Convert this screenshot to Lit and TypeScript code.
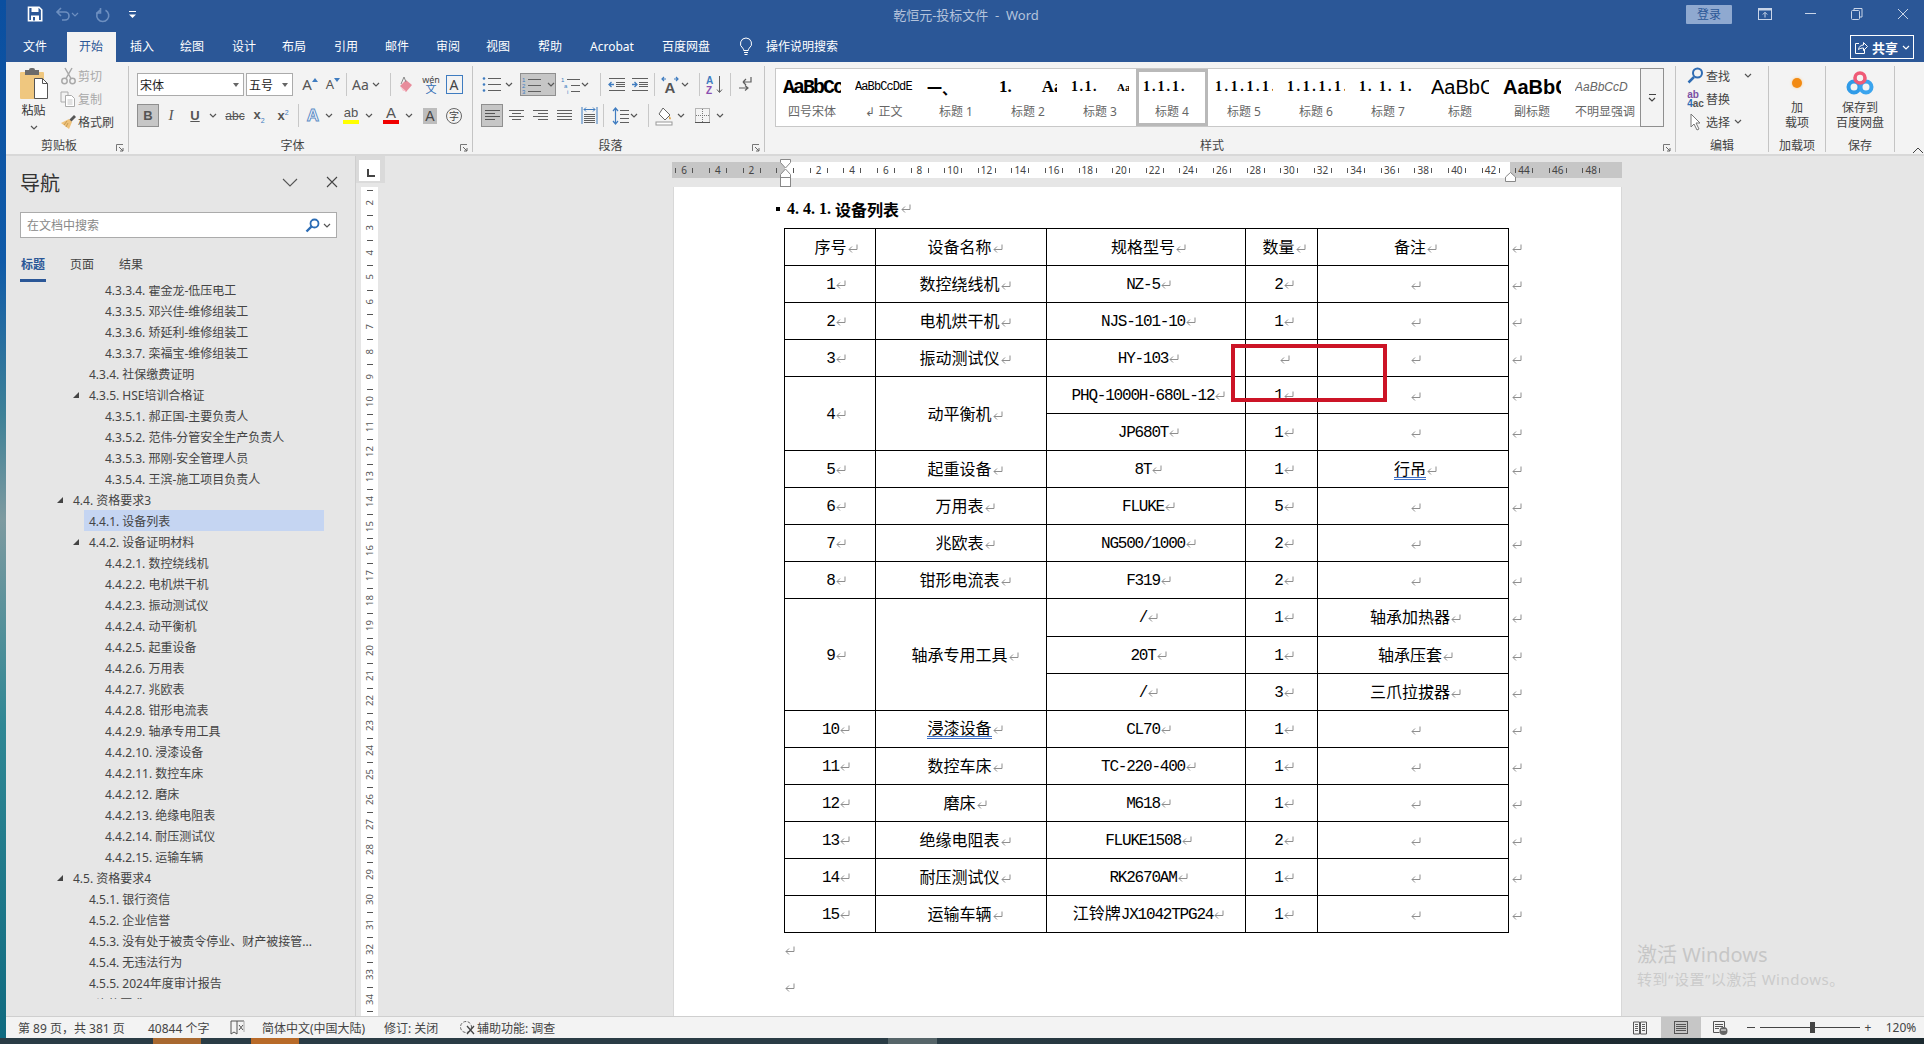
import { LitElement, html, css, svg, TemplateResult } from "lit";
import { customElement } from "lit/decorators.js";

type Slot = [number, number, unknown, string?];

function slots(start: number, items: Slot[]) {
  let prev = start;
  return items.map(([a, b, t, cls]) => {
    const r = html`<span class="slot ${cls ?? ""}" style="width:${b - a}px;margin-left:${a - prev}px">${t}</span>`;
    prev = b;
    return r;
  });
}
const I = (w: number, h: number, body: unknown) => html`<svg width=${w} height=${h} class="ic">${body}</svg>`;
const chev = (c = "#555") => I(8, 5, svg`<path d="M1 1l3 3 3-3" fill="none" stroke=${c} stroke-width="1.2"/>`);
const sep = html`<i class="sep"></i>`;
const G = "#5f5f5f";
const B = "#3f7cc0";
const lines = (x: number, ys: number[], w: number[], c = G) => ys.map((y, i) => svg`<rect x=${x} y=${y} width=${w[i]} height="1" fill=${c}/>`);

const icons = {
  save: I(16, 16, svg`<path d="M1.5 1.2h10.6l2.6 2.6v11H1.5z" fill="none" stroke="#fff" stroke-width="1.6"/><rect x="4.5" y="1.5" width="7" height="4.5" fill="#fff"/><rect x="4" y="9.5" width="8" height="5" fill="#fff"/><rect x="6" y="11" width="2" height="3.5" fill="#2b5797"/>`),
  undo: I(16, 16, svg`<path d="M2 6h8a3.8 3.8 0 0 1 0 8H7M6 2L2 6l4 4" fill="none" stroke="#6d8fc0" stroke-width="1.6"/>`),
  redo: I(16, 16, svg`<path d="M5 3.2a6 6 0 1 0 5.5 0M5.5 1v5H1" fill="none" stroke="#6d8fc0" stroke-width="1.6" transform="translate(0 1)"/>`),
  custom: I(9, 9, svg`<rect x="1" y="1" width="7" height="1" fill="#fff"/><path d="M1 4.5h7L4.5 8z" fill="#fff"/>`),
  display: I(14, 12, svg`<rect x=".5" y=".5" width="13" height="11" fill="none" stroke="#c9d5e8"/><rect x=".5" y=".5" width="13" height="2" fill="#c9d5e8"/><path d="M7 9.5V4.5M4.8 6.5L7 4.3l2.2 2.2" fill="none" stroke="#c9d5e8"/>`),
  min: I(12, 2, svg`<rect width="11" height="1" y="0" fill="#c9d5e8"/>`),
  restore: I(12, 12, svg`<rect x=".5" y="2.5" width="8" height="9" rx="1" fill="none" stroke="#c9d5e8"/><path d="M3 2.5V.5h8v8.5H8.5" fill="none" stroke="#c9d5e8"/>`),
  close: I(12, 12, svg`<path d="M1 1l10 10M11 1L1 11" stroke="#c9d5e8" stroke-width="1"/>`),
  bulb: I(14, 19, svg`<path d="M7 1a5.6 5.6 0 0 0-3.3 10.1c.8.7 1 1.500 1 2.400h4.600c0-.9.200-1.700 1-2.400A5.600 5.600 0 0 0 7 1z" fill="none" stroke="#fff"/><path d="M5 15.500h4M5.500 17.500h3" stroke="#fff"/>`),
  share: I(14, 15, svg`<path d="M5 3.500H1.500v10h9V9" fill="none" stroke="#fff"/><path d="M4.500 9.500c.5-3 2.500-4.500 5-4.500V2.500l4 4-4 4V8c-2 0-3.500.5-5 1.500z" fill="none" stroke="#fff"/>`),
  paste: I(30, 31, svg`<rect x="1" y="4" width="24" height="27" rx="1" fill="#efc77f"/><rect x="6" y="2" width="14" height="5" fill="#6b6b6b"/><rect x="10" y="0" width="6" height="4" rx="2" fill="#6b6b6b"/><path d="M15.500 10.500h8l5 5v15h-13z" fill="#fff" stroke="#555"/><path d="M23.500 10.500v5h5" fill="none" stroke="#555"/>`),
  cut: I(15, 18, svg`<circle cx="3.500" cy="14" r="2.700" fill="none" stroke="#a9a9a9" stroke-width="1.500"/><circle cx="11.500" cy="14" r="2.700" fill="none" stroke="#a9a9a9" stroke-width="1.500"/><path d="M5 11.500L11 1M10 11.500L4 1" stroke="#a9a9a9" stroke-width="1.500"/>`),
  copy: I(16, 16, svg`<path d="M1 1h7v3M1 1v10h4" fill="none" stroke="#ababab"/><path d="M5.500 4.500h6l3 3v8h-9z" fill="#fff" stroke="#ababab"/><path d="M7.500 9h5M7.500 11h5M7.500 13h5" stroke="#c4c4c4"/>`),
  painter: I(17, 16, svg`<path d="M9 6l5-5 2 2-5 5z" fill="#555"/><path d="M9 5l3 3-3 7-8-6z" fill="#efc27a"/><path d="M7 7l-3 4M8 9l-2 4" stroke="#c69a52"/>`),
  launcher: I(8, 8, svg`<path d="M.5 7V.5H7" fill="none" stroke="#777"/><path d="M3 3l4 4M7 4v3H4" fill="none" stroke="#666"/>`),
  eraser: I(18, 18, svg`<path d="M3 10l6-6 6 5-6 7z" fill="#e88c9b"/><path d="M3 10l3 5h3" fill="#f7c7cf"/><path d="M4 8L7 1l2 5" fill="none" stroke="#888"/>`),
  bullets: I(19, 17, svg`<circle cx="2" cy="2.500" r="1.300" fill=${B}/><circle cx="2" cy="8.500" r="1.300" fill=${B}/><circle cx="2" cy="14.500" r="1.300" fill=${B}/>${lines(6, [2, 8, 14], [13, 13, 13])}`),
  numbered: I(19, 18, svg`<text x="0" y="5.500" font-size="6" fill=${B} font-family="Liberation Sans">1</text><text x="0" y="11.500" font-size="6" fill=${B} font-family="Liberation Sans">2</text><text x="0" y="17.500" font-size="6" fill=${B} font-family="Liberation Sans">3</text>${lines(6, [3, 9, 15], [13, 13, 13])}`),
  multi: I(19, 18, svg`<text x="0" y="5.500" font-size="6" fill=${B} font-family="Liberation Sans">1</text><text x="3" y="11.500" font-size="6" fill=${B} font-family="Liberation Sans">a</text><text x="6" y="17.500" font-size="6" fill=${B} font-family="Liberation Sans">i</text>${lines(6, [3], [13])}${lines(10, [9, 15], [9, 9])}`),
  outdent: I(18, 15, svg`<path d="M6 7.500H1M3.500 5L1 7.500 3.500 10" fill="none" stroke=${B} stroke-width="1.300"/>${lines(1, [1, 13], [16, 16])}${lines(8, [5, 7, 9], [9, 9, 9])}`),
  indent: I(18, 15, svg`<path d="M1 7.500h5M3.500 5L6 7.500 3.500 10" fill="none" stroke=${B} stroke-width="1.300"/>${lines(1, [1, 13], [16, 16])}${lines(8, [5, 7, 9], [9, 9, 9])}`),
  cnlayout: html`<span class="cn"><svg width="18" height="6" class="ic"><path d="M1 3h4M3 1L1 3l2 2M17 3h-4M15 1l2 2-2 2" fill="none" stroke=${B} stroke-width="1.200"/></svg><b>A</b></span>`,
  sort: I(20, 19, svg`<text x="1" y="8.500" font-size="10" fill=${B} font-family="Liberation Sans" font-weight="700">A</text><text x="1" y="18.500" font-size="10" fill="#8b4fb0" font-family="Liberation Sans" font-weight="700">Z</text><path d="M14.500 1v16M12 14.500l2.500 3 2.500-3" fill="none" stroke=${G}/>`),
  mark: I(16, 17, svg`<path d="M13 1v5H5M5 6l3-3M5 6l3 3" fill="none" stroke=${G} stroke-width="1.200"/><path d="M1 12h9M7 9.500l3 2.500-3 2.500" fill="none" stroke=${G} stroke-width="1.200"/>`),
  left: I(15, 13, lines(0, [1, 4, 7, 10], [15, 10, 15, 10], "#555")),
  center: I(15, 13, lines(0, [1, 7], [15, 15]).concat(lines(3, [4, 10], [9, 9]))),
  right: I(15, 13, lines(0, [1, 7], [15, 15]).concat(lines(5, [4, 10], [10, 10]))),
  justify: I(15, 13, lines(0, [1, 4, 7, 10], [15, 15, 15, 15])),
  dist: I(17, 19, svg`<rect x=".5" y="1" width="1" height="17" fill=${B}/><rect x="15.500" y="1" width="1" height="17" fill=${B}/><path d="M3 3.500h11M5 1.500l-2 2 2 2M12 1.500l2 2-2 2" fill="none" stroke=${B}/>${lines(3, [8, 10, 12, 14, 16], [11, 11, 11, 11, 11])}`),
  spacing: I(17, 18, svg`<path d="M3.500 1v16M1 4l2.500-3L6 4M1 14l2.500 3L6 14" fill="none" stroke=${B} stroke-width="1.200"/>${lines(8, [3, 7, 11, 15], [9, 9, 9, 9])}`),
  shade: I(17, 18, svg`<path d="M7 1l7 7-5 5-6-6z" fill="#fff" stroke="#666"/><path d="M13.500 9c1.500 2 2 3 .5 3.500-1 0-1.500-1.500-.5-3.500z" fill="#e0a64b"/><rect x="0" y="15" width="16" height="3" fill="#fff" stroke="#999"/>`),
  borders: I(15, 15, svg`<rect x=".5" y=".5" width="14" height="14" fill="none" stroke="#777" stroke-dasharray="1 1"/><path d="M7.500 1v14M1 7.500h14" stroke="#777" stroke-dasharray="1 1"/><rect y="14" width="15" height="1" fill="#555"/>`),
  find: I(17, 17, svg`<circle cx="10.500" cy="6" r="4.500" fill="none" stroke="#2f6cb3" stroke-width="2"/><path d="M7 10l-5.500 5.500" stroke="#2f6cb3" stroke-width="2.500"/>`),
  replace: html`<span class="rep"><i>ab</i><i><s>4</s>ac</i></span>`,
  select: I(13, 18, svg`<path d="M2 1v13l3-3 3 6 2-1-3-6h4z" fill="#fff" stroke="#777"/>`),
  dot: html`<i class="dot"></i>`,
  baidu: I(28, 26, svg`<circle cx="8" cy="17" r="5.500" fill="none" stroke="#2f9be8" stroke-width="4"/><circle cx="20" cy="17" r="5.500" fill="none" stroke="#3aa4ee" stroke-width="4"/><circle cx="14" cy="8" r="5" fill="none" stroke="#ef5a76" stroke-width="3.600"/>`),
  chevNav: I(16, 9, svg`<path d="M1 1l7 7 7-7" fill="none" stroke="#555" stroke-width="1.100"/>`),
  closeNav: I(12, 12, svg`<path d="M1 1l10 10M11 1L1 11" stroke="#444" stroke-width="1.100"/>`),
  searchBlue: I(15, 15, svg`<circle cx="9.500" cy="5.500" r="4" fill="none" stroke="#2b6cb5" stroke-width="1.800"/><path d="M6.500 8.500L1.500 13.500" stroke="#2b6cb5" stroke-width="2.400"/>`),
  tri: I(8, 8, svg`<path d="M7 1v6H1z" fill="#444"/>`),
  proof: I(15, 15, svg`<path d="M1 1h6v13l-3-2-3 2zM7 1h7" fill="none" stroke="#555"/><path d="M9 5l4 5M13 5l-4 5" stroke="#555"/><path d="M14 1v11" stroke="#aaa"/>`),
  access: I(17, 16, svg`<circle cx="7" cy="7" r="5.500" fill="none" stroke="#666" stroke-dasharray="3 1.500"/><path d="M8 6l7 8M15 6l-7 8" stroke="#444" stroke-width="1.300"/>`),
  book: I(14, 14, svg`<path d="M.5 1h6v12h-6zM7.500 1h6v12h-6z" fill="none" stroke="#555"/>${lines(2, [3, 5, 7, 9], [3, 3, 3, 3])}${lines(9, [3, 5, 7, 9], [3, 3, 3, 3])}`),
  print: I(14, 13, svg`<rect x=".5" y=".5" width="13" height="12" fill="none" stroke="#555"/>${lines(2, [3, 5, 7, 9], [10, 10, 10, 10], "#555")}`),
  web: I(15, 14, svg`<path d="M.5.500h11v6M.5.500v11h6" fill="none" stroke="#555"/>${lines(2, [3, 5, 7], [8, 8, 4], "#555")}<circle cx="10.500" cy="10" r="4" fill="#666"/><path d="M8 9h5" stroke="#fff"/>`),
  ret: I(11, 10, svg`<path d="M10 .5v5H2M5 2.500L2 5.500l3 3" fill="none" stroke="#8e8e8e"/>`),
};

const cjkSplit = (s: string) =>
  s.split(/([\x00-\x7f]+)/).filter(Boolean).map((p) => (/^[\x00-\x7f]+$/.test(p) ? html`<span class="lat">${p}</span>` : p));
const cellText = (s: string, cls = "") => html`<span class=${cls}>${cjkSplit(s)}</span>${icons.ret}`;

const TREE: [string, string, boolean?, boolean?][] = [
  ["l4", "4.3.3.4. 霍金龙-低压电工"],
  ["l4", "4.3.3.5. 邓兴佳-维修组装工"],
  ["l4", "4.3.3.6. 矫延利-维修组装工"],
  ["l4", "4.3.3.7. 栾福宝-维修组装工"],
  ["l3", "4.3.4. 社保缴费证明"],
  ["l3", "4.3.5. HSE培训合格证", true],
  ["l4", "4.3.5.1. 郝正国-主要负责人"],
  ["l4", "4.3.5.2. 范伟-分管安全生产负责人"],
  ["l4", "4.3.5.3. 邢刚-安全管理人员"],
  ["l4", "4.3.5.4. 王滨-施工项目负责人"],
  ["l2", "4.4. 资格要求3", true],
  ["l3", "4.4.1. 设备列表", false, true],
  ["l3", "4.4.2. 设备证明材料", true],
  ["l4", "4.4.2.1. 数控绕线机"],
  ["l4", "4.4.2.2. 电机烘干机"],
  ["l4", "4.4.2.3. 振动测试仪"],
  ["l4", "4.4.2.4. 动平衡机"],
  ["l4", "4.4.2.5. 起重设备"],
  ["l4", "4.4.2.6. 万用表"],
  ["l4", "4.4.2.7. 兆欧表"],
  ["l4", "4.4.2.8. 钳形电流表"],
  ["l4", "4.4.2.9. 轴承专用工具"],
  ["l4", "4.4.2.10. 浸漆设备"],
  ["l4", "4.4.2.11. 数控车床"],
  ["l4", "4.4.2.12. 磨床"],
  ["l4", "4.4.2.13. 绝缘电阻表"],
  ["l4", "4.4.2.14. 耐压测试仪"],
  ["l4", "4.4.2.15. 运输车辆"],
  ["l2", "4.5. 资格要求4", true],
  ["l3", "4.5.1. 银行资信"],
  ["l3", "4.5.2. 企业信誉"],
  ["l3", "4.5.3. 没有处于被责令停业、财产被接管..."],
  ["l3", "4.5.4. 无违法行为"],
  ["l3", "4.5.5. 2024年度审计报告"],
  ["l2", "4.6. 资格要求5"],
];

type Row = { n?: string; ns?: number; name?: string; nameU?: boolean; spec: string; qty: string; note: string; noteU?: boolean };
const ROWS: Row[] = [
  { n: "序号", name: "设备名称", spec: "规格型号", qty: "数量", note: "备注" },
  { n: "1", name: "数控绕线机", spec: "NZ-5", qty: "2", note: "" },
  { n: "2", name: "电机烘干机", spec: "NJS-101-10", qty: "1", note: "" },
  { n: "3", name: "振动测试仪", spec: "HY-103", qty: "", note: "" },
  { n: "4", ns: 2, name: "动平衡机", spec: "PHQ-1000H-680L-12", qty: "1", note: "" },
  { spec: "JP680T", qty: "1", note: "" },
  { n: "5", name: "起重设备", spec: "8T", qty: "1", note: "行吊", noteU: true },
  { n: "6", name: "万用表", spec: "FLUKE", qty: "5", note: "" },
  { n: "7", name: "兆欧表", spec: "NG500/1000", qty: "2", note: "" },
  { n: "8", name: "钳形电流表", spec: "F319", qty: "2", note: "" },
  { n: "9", ns: 3, name: "轴承专用工具", spec: "/", qty: "1", note: "轴承加热器" },
  { spec: "20T", qty: "1", note: "轴承压套" },
  { spec: "/", qty: "3", note: "三爪拉拔器" },
  { n: "10", name: "浸漆设备", nameU: true, spec: "CL70", qty: "1", note: "" },
  { n: "11", name: "数控车床", spec: "TC-220-400", qty: "1", note: "" },
  { n: "12", name: "磨床", spec: "M618", qty: "1", note: "" },
  { n: "13", name: "绝缘电阻表", spec: "FLUKE1508", qty: "2", note: "" },
  { n: "14", name: "耐压测试仪", spec: "RK2670AM", qty: "1", note: "" },
  { n: "15", name: "运输车辆", spec: "江铃牌JX1042TPG24", qty: "1", note: "" },
];

const TABS: [string, number, number][] = [
  ["文件", 35, 49], ["开始", 91, 49], ["插入", 142, 49], ["绘图", 192, 49], ["设计", 244, 49], ["布局", 294, 49],
  ["引用", 346, 49], ["邮件", 397, 49], ["审阅", 448, 49], ["视图", 498, 49], ["帮助", 550, 49], ["Acrobat", 612, 60], ["百度网盘", 686, 64],
];

const STYLES: [unknown, string, string?][] = [
  [html`<span class="p1">AaBbCc</span>`, "四号宋体"],
  [html`<span class="p2">AaBbCcDdE</span>`, "↲ 正文"],
  [html`<span class="p3">一、</span>`, "标题 1"],
  [html`<span class="p4">1.</span><span class="p4 gapA">Aa</span>`, "标题 2"],
  [html`<span class="p5">1.1.</span><span class="p5s">Aa</span>`, "标题 3"],
  [html`<span class="p6">1.1.1.</span>`, "标题 4", "sel"],
  [html`<span class="p6 w">1.1.1.1.</span>`, "标题 5"],
  [html`<span class="p6 w">1.1.1.1.</span>`, "标题 6"],
  [html`<span class="p6">1. 1. 1. 1</span>`, "标题 7"],
  [html`<span class="p7">AaBbC</span>`, "标题"],
  [html`<span class="p7 b">AaBbC</span>`, "副标题"],
  [html`<span class="p8">AaBbCcD</span>`, "不明显强调"],
];

const HNUM = [6, 4, 2, 0, 2, 4, 6, 8, 10, 12, 14, 16, 18, 20, 22, 24, 26, 28, 30, 32, 34, 36, 38, 40, 42, 44, 46, 48];
const VNUM = Array.from({ length: 34 }, (_, i) => i + 2);

@customElement("app-root")
export class AppRoot extends LitElement {
  static styles = css`
    :host { display: block; width: 1924px; height: 1044px; overflow: hidden; position: relative;
      font-family: "Noto Sans", "Noto Sans CJK SC", sans-serif; font-size: 12px; color: #444; }
    * { box-sizing: border-box; }
    .ic { display: block; flex: none; overflow: visible; }
    .top { display: flex; height: 1038px; }
    .strip { width: 6px; flex: none; background: linear-gradient(180deg, #0b4fa0 0, #0f5aa8 25%, #3e8197 40%, #7d9aa0 50%, #2f8794 70%, #0f6a80 100%); }
    .win { width: 1918px; display: flex; flex-direction: column; }
    .taskbar { height: 6px; background: linear-gradient(90deg, #2a3c45 153px, #a8682f 153px, #a8682f 201px, #2a3c45 201px, #2a3c45 251px, #b86a28 251px, #b86a28 299px, #2a3c45 299px, #2a3c45 888px, #566569 888px, #566569 937px, #2a3c45 937px, #1e2b31 1500px, #1c2a30 100%); }
    .slot { display: flex; align-items: center; justify-content: center; flex: none; white-space: nowrap; }
    .ls { justify-content: flex-start; }

    .title { height: 32px; background: #2b5797; display: flex; align-items: center; color: #c9d5e8; padding-bottom: 4px; }
    .wt { font-size: 13px; color: #b4c3dc; }
    .login { height: 19px; background: #8fa9d0; color: #2b5797; font-size: 12px; border-radius: 1px; }
    .tabs { height: 30px; background: #2b5797; display: flex; align-items: stretch; color: #fff; font-size: 12px; }
    .tabs .slot { padding-bottom: 2px; }
    .tabs .active { background: #f3f3f3; color: #2b5797; }
    .tabs .sharebtn { height: 24px; border: 1px solid #fff; gap: 4px; font-weight: 700; font-size: 13px; margin-top: 3px; padding-bottom: 0; }
    .srch { color: #fff; }

    .ribbon { height: 94px; background: #f3f3f3; border-bottom: 2px solid #d8d8d8; display: flex; padding-top: 4px; position: relative; }
    .g { height: 86px; display: flex; flex-direction: column; border-right: 1px solid #c4c4c4; flex: none; position: relative; }
    .body { flex: 1; min-height: 0; }
    .lab { height: 16px; line-height: 16px; margin-bottom: -2px; text-align: center; color: #444; white-space: nowrap; }
    .lab.hl { padding-right: 16px; }
    .launch { position: absolute; right: 4px; bottom: 0; }
    .g1 { width: 123px; } .g2 { width: 344px; } .g3 { width: 292px; } .g4 { width: 911px; }
    .g5 { width: 93px; } .g6 { width: 57px; } .g7 { width: 69px; } .g8 { flex: 1; border: 0; }
    .g1 .body { display: flex; }
    .pastecol { width: 52px; display: flex; flex-direction: column; align-items: center; padding: 2px 0 0 3px; }
    .pastecol .t { font-size: 12px; line-height: 16px; margin-top: 4px; color: #333; }
    .pastecol .c { margin-top: 6px; }
    .smallw { margin-top: -2px; }
    .small { display: flex; align-items: center; height: 23px; }
    .small .si { width: 20px; display: flex; justify-content: center; }
    .small .tx { font-size: 12px; }
    .dim { color: #a9a9a9; }
    .rows { padding-top: 7px; display: flex; flex-direction: column; gap: 8px; }
    .r { display: flex; height: 23px; align-items: center; }
    .sep { display: block; width: 1px; height: 23px; background: #c8c8c8; }
    .box { height: 23px; border: 1px solid #ababab; background: #fff; display: flex; align-items: center; justify-content: space-between; padding: 0 4px 0 2px; font-size: 12px; color: #222; }
    .box.fn { width: 107px; } .box.fs { width: 47px; }
    .down { width: 0; height: 0; border: 3px solid transparent; border-top: 4px solid #666; margin-top: 3px; }
    .on { background: #c6c6c6; border: 1px solid #8f8f8f; height: 23px; gap: 6px; }
    .up, .dn { position: relative; font-size: 15px; color: #555; line-height: 1; }
    .up.sm, .dn.sm { font-size: 13px; }
    .caret { position: absolute; right: -6px; top: -2px; width: 0; height: 0; border: 3px solid transparent; border-bottom: 4px solid #3f7cc0; }
    .caret.d { border-bottom: 0; border-top: 4px solid #3f7cc0; top: 0; }
    .aa { font-size: 14px; color: #555; }
    .wen { display: flex; flex-direction: column; align-items: center; line-height: 9px; font-size: 9px; color: #444; }
    .wen b { font-size: 11px; font-weight: 400; color: #2f6cb3; line-height: 10px; }
    .abox { width: 17px; height: 19px; border: 1px solid #3f7cc0; font-size: 14px; color: #444; display: flex; align-items: center; justify-content: center; line-height: 1; }
    .bold { font-family: "Liberation Sans", sans-serif; font-weight: 700; color: #555; font-size: 13px; }
    .ital { font-family: "Liberation Serif", serif; font-style: italic; font-size: 15px; color: #555; }
    .und { font-family: "Liberation Sans", sans-serif; text-decoration: underline; font-weight: 700; font-size: 13px; color: #555; }
    .abc { font-family: "Liberation Sans", sans-serif; text-decoration: line-through; font-size: 12px; color: #555; }
    .sub { font-family: "Liberation Sans", sans-serif; font-weight: 700; font-size: 13px; color: #555; }
    .sub sub, .sub sup { font-size: 7px; color: #3f7cc0; font-weight: 400; }
    .glow { font-family: "Liberation Sans", sans-serif; font-size: 17px; font-weight: 700; color: #fff; -webkit-text-stroke: 1px #5f8fc7; }
    .hi, .fc { display: flex; flex-direction: column; align-items: center; line-height: 12px; font-family: "Liberation Sans", sans-serif; color: #555; font-size: 13px; }
    .hi i, .fc i { display: block; width: 16px; height: 4px; background: #ffff00; margin-top: 1px; }
    .fc i { background: #f00000; }
    .fc { font-size: 15px; font-weight: 400; }
    .shaded { background: #bdbdbd; width: 14px; height: 16px; line-height: 16px; font-size: 14px; color: #444; text-align: center; font-family: "Liberation Sans", sans-serif; }
    .circ { width: 16px; height: 16px; border: 1px solid #666; border-radius: 50%; font-size: 10px; line-height: 14px; text-align: center; color: #444; }
    .cn { display: flex; flex-direction: column; align-items: center; line-height: 12px; }
    .cn b { font-size: 15px; font-family: "Liberation Sans", sans-serif; color: #555; }

    .gal { margin: 2px 0 0 10px; display: flex; height: 59px; }
    .gitems { display: flex; background: #fff; border: 1px solid #c8c8c8; border-right: 0; height: 59px; }
    .gi { width: 72px; height: 57px; padding: 2px 7px 0; display: flex; flex-direction: column; flex: none; }
    .gi.sel { box-shadow: inset 0 0 0 3px #b9b9b9; padding-top: 2px; }
    .pv { height: 32px; display: flex; align-items: center; overflow: hidden; white-space: nowrap; color: #000; }
    .gl { text-align: center; color: #666; font-size: 12px; line-height: 18px; white-space: nowrap; }
    .p1 { font: 700 20px "Liberation Mono", monospace; letter-spacing: -2px; }
    .p2 { font: 12px "Liberation Mono", monospace; letter-spacing: -.9px; }
    .p3 { font-size: 15px; font-weight: 700; }
    .p4 { font: 700 17px "Liberation Serif", serif; }
    .gapA { margin-left: 30px; }
    .p5 { font: 700 14px "Liberation Serif", serif; letter-spacing: 1.500px; }
    .p5s { font: 700 11px "Liberation Serif", serif; margin-left: 19px; }
    .p6 { font: 700 14px "Liberation Serif", serif; letter-spacing: 2px; }
    .p6.w { letter-spacing: 2.600px; }
    .p7 { font: 20px "Liberation Sans", sans-serif; }
    .p7.b { font-weight: 700; }
    .p8 { font: italic 12px "Liberation Sans", sans-serif; color: #666; }
    .gscroll { width: 24px; height: 59px; border: 1px solid #8f8f8f; background: #f3f3f3; display: flex; flex-direction: column; align-items: center; justify-content: center; gap: 2px; }
    .gscroll i { display: block; width: 7px; height: 1px; background: #444; }
    .tail { margin-left: 14px; }
    .tail.s { margin-left: 4px; }
    .g5 .si { width: 19px; margin-left: 10px; }
    .g5 .tx { margin-left: 1px; }
    .rep { display: flex; flex-direction: column; font: 700 10px/9px "Liberation Sans", sans-serif; color: #7a4fa5; }
    .rep i { font-style: normal; display: block; }
    .rep i:last-child { color: #555; } .rep s { text-decoration: none; color: #2f6cb3; }
    .vcol { display: flex; flex-direction: column; align-items: center; }
    .vcol .top2 { height: 34px; display: flex; align-items: center; justify-content: center; }
    .vcol .t { line-height: 15px; font-size: 12px; color: #444; white-space: nowrap; }
    .dot { display: block; width: 10px; height: 10px; border-radius: 50%; background: #f28a12; box-shadow: 0 0 3px #f9c98a; }
    .collapse { align-self: flex-end; margin: 0 0 -2px 10px; }

    .main { flex: 1; min-height: 0; display: flex; background: #e6e6e6; }
    .nav { width: 350px; flex: none; border-right: 1px solid #cfcfcf; }
    .navh { height: 52px; display: flex; align-items: center; padding: 0 0 0 14px; }
    .navh .t { font-size: 20px; color: #333; width: 262px; }
    .navh .x { margin-left: 28px; }
    .search { margin-left: 14px; width: 317px; height: 26px; background: #fff; border: 1px solid #ababab; display: flex; align-items: center; padding: 0 5px 0 6px; color: #888; margin-top: 4px; }
    .search .ph { flex: 1; }
    .search .ch { margin-left: 3px; }
    .ntabs { display: flex; margin: 16px 0 0 15px; gap: 25px; height: 25px; font-size: 12px; }
    .ntabs span { position: relative; line-height: 22px; width: 24px; white-space: nowrap; }
    .ntabs .act { color: #2b5797; font-weight: 700; }
    .ntabs .act::after { content: ""; position: absolute; left: -1px; right: -1px; top: 25px; height: 3px; background: #2b5797; }
    .tree { height: 714px; overflow: hidden; margin-top: 6px; }
    .tin { margin-top: -6px; }
    .tr { height: 21px; display: flex; align-items: center; white-space: nowrap; color: #444; }
    .l2 { padding-left: 67px; } .l3 { padding-left: 83px; } .l4 { padding-left: 99px; }
    .tr.sel { margin-left: 78px; width: 240px; padding-left: 5px; background: #c5d5f2; }
    .tri { width: 17px; margin-left: -17px; flex: none; display: flex; align-items: center; }

    .vr { width: 30px; flex: none; display: flex; flex-direction: column; }
    .corner { width: 29px; height: 27px; background: #dadada; display: flex; padding: 4px 0 2px 3px; }
    .corner i { position: relative; display: block; width: 21px; height: 21px; background: #fff; }
    .corner i::after { content: ""; position: absolute; left: 8px; top: 9px; width: 6px; height: 6px; border-left: 2px solid #444; border-bottom: 2px solid #444; }
    .vruler { margin: 4px 0 0 5px; width: 17px; flex: 1; background: #fff; overflow: hidden; padding-top: 3px; }
    .vc { height: 24.9px; position: relative; display: flex; align-items: center; justify-content: center; font-size: 9.500px; color: #555; }
    .vc::before { content: ""; position: absolute; left: 6px; top: 0; width: 6px; height: 1px; background: #555; }
    .vc span { writing-mode: vertical-rl; transform: rotate(180deg); line-height: 1; }

    .doc { flex: 1; min-width: 0; display: flex; flex-direction: column; position: relative; overflow: hidden; }
    .hr { margin: 6px 0 0 286px; width: 950px; height: 16px; flex: none; display: flex; overflow: visible; position: relative;
      background: linear-gradient(90deg, #c6c6c6 113px, #fff 113px, #fff 838px, #c6c6c6 838px); }
    .hrc { display: flex; margin-left: -4.600px; overflow: hidden; width: 954.600px; }
    .hc { width: 33.600px; flex: none; height: 16px; line-height: 16px; text-align: center; font-size: 10px; color: #444;
      background: linear-gradient(#555, #555) 8px 50% / 1px 5px no-repeat, linear-gradient(#555, #555) 25px 50% / 1px 5px no-repeat; }
    .mark { position: absolute; }
    .m1 { left: 108px; top: -3px; }
    .m2 { left: 833px; top: 10px; }
    .page { margin: 9px 0 0 287px; width: 949px; flex: 1; min-height: 0; background: #fff; padding: 11px 0 0 102px; overflow: hidden; border-left: 1px solid #d8d8d8; border-right: 1px solid #d8d8d8; }
    .hd { height: 22px; display: flex; align-items: center; color: #000; font-weight: 700; font-size: 16px; margin-bottom: 8px; }
    .hd .bu { width: 4px; height: 4px; background: #000; margin-right: 7px; flex: none; }
    .hd .n { font-family: "Liberation Serif", serif; white-space: pre; }
    .hd .ic { margin-left: 1px; }
    .tw { position: relative; margin-left: 8px; }
    table { border-collapse: collapse; table-layout: fixed; width: 748px; font-size: 16px; color: #000; }
    .c1 { width: 91px; } .c2 { width: 171px; } .c3 { width: 199px; } .c4 { width: 72px; } .c5 { width: 191px; } .c6 { width: 24px; }
    td { border: 1px solid #000; padding: 0 0 0 5px; height: 37.050px; text-align: center; vertical-align: middle; white-space: nowrap; line-height: 20px; }
    td.no { padding-left: 12px; }
    td.nm { padding-left: 8px; }
    td .ic { display: inline-block; vertical-align: -1px; }
    td.e { border: 0; border-left: 1px solid #000; text-align: left; padding-left: 2px; }
    .lat { font-family: "Liberation Mono", monospace; letter-spacing: -1.200px; }
    .u { border-bottom: 3px double #3d6fc4; line-height: 16px; display: inline-block; }
    .after { height: 37px; display: flex; align-items: center; margin-left: 8px; }
    .red { position: absolute; left: 447px; top: 116px; width: 156px; height: 58px; border: 4px solid #cc1426; pointer-events: none; }

    .status { height: 22px; background: #f3f3f3; border-top: 1px solid #cfcfcf; display: flex; align-items: center; flex: none; color: #444; font-size: 12px; }
    .st-on { background: #c6c6c6; height: 21px; }
    .mn { width: 8px; height: 1px; background: #444; display: block; }
    .sl { height: 1px; background: #444; width: 100px; position: relative; }
    .sl i { position: absolute; left: 50px; top: -5px; width: 5px; height: 11px; background: #444; }
    .wm { position: absolute; left: 1637px; top: 942px; color: #c6c6c6; pointer-events: none; white-space: nowrap; }
    .wm div:first-child { font-size: 20px; line-height: 26px; }
    .wm div:last-child { font-size: 15px; line-height: 22px; color: #cbcbcb; letter-spacing: .5px; }
  `;

  private renderTitle() {
    return html`<div class="title">${slots(6, [
      [27, 43, icons.save],
      [55, 71, icons.undo],
      [71, 79, chev("#6d8fc0")],
      [95, 111, icons.redo],
      [127, 137, icons.custom],
      [846, 1086, html`<span class="wt">乾恒元-投标文件&nbsp; - &nbsp;Word</span>`],
      [1686, 1732, "登录", "login"],
      [1757, 1772, icons.display],
      [1803, 1819, icons.min],
      [1849, 1865, icons.restore],
      [1895, 1911, icons.close],
    ])}</div>`;
  }

  private renderTabs() {
    const t: Slot[] = TABS.map(([l, c, w]) => [c - w / 2, c + w / 2, l, l === "开始" ? "active" : ""]);
    t.push([739, 753, icons.bulb], [762, 842, "操作说明搜索", "srch"]);
    t.push([1850, 1914, html`${icons.share}<span>共享</span>${chev("#fff")}`, "sharebtn"]);
    return html`<div class="tabs">${slots(6, t)}</div>`;
  }

  private g1() {
    return html`<div class="g g1"><div class="body">
        <div class="pastecol">${icons.paste}<span class="t">粘贴</span><span class="c">${chev()}</span></div>
        <div class="smallw">
          <div class="small dim"><span class="si">${icons.cut}</span><span class="tx">剪切</span></div>
          <div class="small dim"><span class="si">${icons.copy}</span><span class="tx">复制</span></div>
          <div class="small"><span class="si">${icons.painter}</span><span class="tx">格式刷</span></div>
        </div>
      </div><div class="lab hl">剪贴板</div><span class="launch">${icons.launcher}</span></div>`;
  }

  private g2() {
    const a: Slot[] = [
      [137, 244, html`<span class="box fn">宋体<i class="down"></i></span>`],
      [246, 293, html`<span class="box fs">五号<i class="down"></i></span>`],
      [296, 318, html`<span class="up">A<i class="caret"></i></span>`],
      [319, 341, html`<span class="up sm">A<i class="caret d"></i></span>`],
      [345, 347, sep],
      [351, 370, html`<span class="aa">Aa</span>`],
      [370, 382, chev()],
      [389, 391, sep],
      [396, 416, icons.eraser],
      [420, 442, html`<span class="wen">wén<b>文</b></span>`],
      [444, 464, html`<span class="abox">A</span>`],
    ];
    const b: Slot[] = [
      [137, 159, html`<span class="bold">B</span>`, "on"],
      [160, 182, html`<span class="ital">I</span>`],
      [185, 205, html`<span class="und">U</span>`],
      [207, 219, chev()],
      [224, 246, html`<span class="abc">abc</span>`],
      [248, 270, html`<span class="sub">x<sub>2</sub></span>`],
      [272, 294, html`<span class="sub">x<sup>2</sup></span>`],
      [297, 299, sep],
      [303, 323, html`<span class="glow">A</span>`],
      [323, 335, chev()],
      [341, 361, html`<span class="hi">ab<i></i></span>`],
      [363, 375, chev()],
      [381, 401, html`<span class="fc">A<i></i></span>`],
      [403, 415, chev()],
      [420, 440, html`<span class="shaded">A</span>`],
      [444, 464, html`<span class="circ">字</span>`],
    ];
    return html`<div class="g g2"><div class="body rows">
        <div class="r">${slots(129, a)}</div>
        <div class="r">${slots(129, b)}</div>
      </div><div class="lab hl">字体</div><span class="launch">${icons.launcher}</span></div>`;
  }

  private g3() {
    const a: Slot[] = [
      [481, 501, icons.bullets],
      [503, 515, chev()],
      [520, 556, html`${icons.numbered}${chev()}`, "on"],
      [560, 580, icons.multi],
      [579, 591, chev()],
      [599, 601, sep],
      [607, 627, icons.outdent],
      [630, 650, icons.indent],
      [653, 655, sep],
      [660, 680, icons.cnlayout],
      [679, 691, chev()],
      [698, 700, sep],
      [705, 725, icons.sort],
      [729, 731, sep],
      [736, 756, icons.mark],
    ];
    const b: Slot[] = [
      [481, 503, icons.left, "on"],
      [505, 527, icons.center],
      [529, 551, icons.right],
      [553, 575, icons.justify],
      [578, 600, icons.dist],
      [602, 604, sep],
      [610, 630, icons.spacing],
      [628, 640, chev()],
      [647, 649, sep],
      [654, 674, icons.shade],
      [675, 687, chev()],
      [692, 712, icons.borders],
      [714, 726, chev()],
    ];
    return html`<div class="g g3"><div class="body rows">
        <div class="r">${slots(473, a)}</div>
        <div class="r">${slots(473, b)}</div>
      </div><div class="lab hl">段落</div><span class="launch">${icons.launcher}</span></div>`;
  }

  private g4() {
    return html`<div class="g g4"><div class="body"><div class="gal">
        <div class="gitems">${STYLES.map(
          ([p, l, c]) => html`<div class="gi ${c ?? ""}"><div class="pv">${p}</div><div class="gl">${l}</div></div>`
        )}</div>
        <div class="gscroll"><i></i>${chev("#444")}</div>
      </div></div><div class="lab hl">样式</div><span class="launch">${icons.launcher}</span></div>`;
  }

  private g5() {
    return html`<div class="g g5"><div class="body"><div class="smallw">
        <div class="small"><span class="si">${icons.find}</span><span class="tx">查找</span><span class="tail">${chev()}</span></div>
        <div class="small"><span class="si">${icons.replace}</span><span class="tx">替换</span></div>
        <div class="small"><span class="si">${icons.select}</span><span class="tx">选择</span><span class="tail s">${chev()}</span></div>
      </div></div><div class="lab">编辑</div></div>`;
  }

  private renderRibbon() {
    return html`<div class="ribbon">
      ${this.g1()}${this.g2()}${this.g3()}${this.g4()}${this.g5()}
      <div class="g g6"><div class="body vcol"><div class="top2">${icons.dot}</div><span class="t">加</span><span class="t">载项</span></div><div class="lab">加载项</div></div>
      <div class="g g7"><div class="body vcol"><div class="top2">${icons.baidu}</div><span class="t">保存到</span><span class="t">百度网盘</span></div><div class="lab">保存</div></div>
      <div class="g g8"><div class="body"></div><span class="collapse">${I(12, 7, svg`<path d="M1 6l5-5 5 5" fill="none" stroke="#444"/>`)}</span></div>
    </div>`;
  }

  private renderNav() {
    return html`<div class="nav">
      <div class="navh"><span class="t">导航</span>${icons.chevNav}<span class="x">${icons.closeNav}</span></div>
      <div class="search"><span class="ph">在文档中搜索</span>${icons.searchBlue}<span class="ch">${chev()}</span></div>
      <div class="ntabs"><span class="act">标题</span><span>页面</span><span>结果</span></div>
      <div class="tree"><div class="tin">${TREE.map(
        ([l, t, tri, sel]) => html`<div class="tr ${sel ? "sel" : l}">${tri ? html`<span class="tri">${icons.tri}</span>` : ""}${t}</div>`
      )}</div></div>
    </div>`;
  }

  private renderVRuler() {
    return html`<div class="vr"><div class="corner"><i></i></div>
      <div class="vruler">${VNUM.map((n) => html`<div class="vc">${n <= 34 ? html`<span>${n}</span>` : ""}</div>`)}</div>
    </div>`;
  }

  private renderDoc() {
    return html`<div class="doc">
      <div class="hr">
        <div class="hrc">${HNUM.map((n) => html`<div class="hc">${n === 0 ? "" : n}</div>`)}</div>
        <svg class="mark m1" width="11" height="29"><path d="M.5.500h10v3L5.500 9 .5 3.500z" fill="#fff" stroke="#888"/><path d="M5.500 10l5 5.500v3H.5v-3z" fill="#fff" stroke="#888"/><rect x=".5" y="18.500" width="10" height="9" fill="#fff" stroke="#888"/></svg>
        <svg class="mark m2" width="11" height="10"><path d="M5.500.500l5 4.500v4.500H.5V5z" fill="#fff" stroke="#888"/></svg>
      </div>
      <div class="page">
        <div class="hd"><i class="bu"></i><span class="n">4. 4. 1. </span>设备列表${icons.ret}</div>
        <div class="tw">
          <table>
            <colgroup><col class="c1"/><col class="c2"/><col class="c3"/><col class="c4"/><col class="c5"/><col class="c6"/></colgroup>
            ${ROWS.map(
              (r) => html`<tr>
                ${r.n !== undefined ? html`<td class="no" rowspan=${r.ns ?? 1}>${cellText(r.n)}</td>` : ""}
                ${r.name !== undefined ? html`<td class="nm" rowspan=${r.ns ?? 1}>${cellText(r.name, r.nameU ? "u" : "")}</td>` : ""}
                <td>${cellText(r.spec)}</td>
                <td>${cellText(r.qty)}</td>
                <td>${cellText(r.note, r.noteU ? "u" : "")}</td>
                <td class="e">${icons.ret}</td>
              </tr>`
            )}
          </table>
          <div class="red"></div>
        </div>
        <div class="after">${icons.ret}</div>
        <div class="after">${icons.ret}</div>
      </div>
    </div>`;
  }

  private renderStatus() {
    return html`<div class="status">${slots(6, [
      [18, 130, "第 89 页，共 381 页", "ls"],
      [148, 212, "40844 个字", "ls"],
      [229, 245, icons.proof],
      [262, 366, "简体中文(中国大陆)", "ls"],
      [384, 440, "修订: 关闭", "ls"],
      [458, 476, icons.access],
      [477, 556, "辅助功能: 调查", "ls"],
      [1633, 1647, icons.book],
      [1661, 1701, icons.print, "st-on"],
      [1713, 1728, icons.web],
      [1746, 1756, html`<span class="mn"></span>`],
      [1760, 1860, html`<span class="sl"><i></i></span>`],
      [1862, 1874, "+"],
      [1882, 1920, "120%"],
    ])}</div>`;
  }

  render(): TemplateResult {
    return html`<div class="top"><div class="strip"></div><div class="win">
        ${this.renderTitle()}${this.renderTabs()}${this.renderRibbon()}
        <div class="main">${this.renderNav()}${this.renderVRuler()}${this.renderDoc()}</div>
        ${this.renderStatus()}
      </div></div>
      <div class="taskbar"></div>
      <div class="wm"><div>激活 Windows</div><div>转到“设置”以激活 Windows。</div></div>`;
  }
}
